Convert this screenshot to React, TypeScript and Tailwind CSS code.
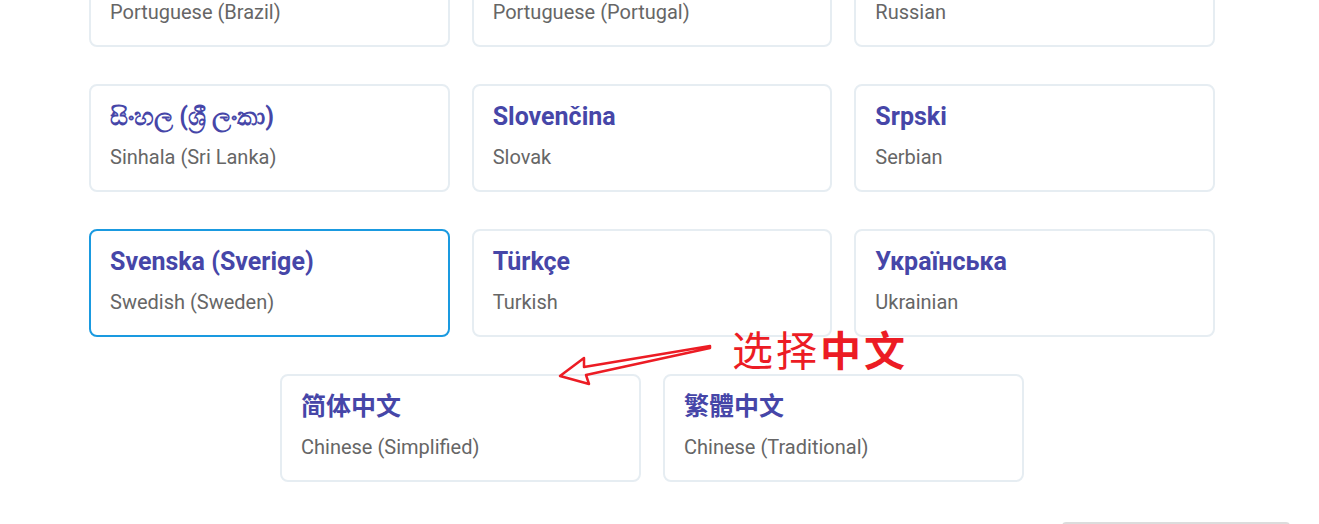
import React from 'react'

type Lang = { name: string; label: string; selected?: boolean }

const rows: Lang[][] = [
  [
    { name: 'Português (Brasil)', label: 'Portuguese (Brazil)' },
    { name: 'Português (Portugal)', label: 'Portuguese (Portugal)' },
    { name: 'Русский', label: 'Russian' },
  ],
  [
    { name: 'සිංහල (ශ්‍රී ලංකා)', label: 'Sinhala (Sri Lanka)' },
    { name: 'Slovenčina', label: 'Slovak' },
    { name: 'Srpski', label: 'Serbian' },
  ],
  [
    { name: 'Svenska (Sverige)', label: 'Swedish (Sweden)', selected: true },
    { name: 'Türkçe', label: 'Turkish' },
    { name: 'Українська', label: 'Ukrainian' },
  ],
]

const chinese: Lang[] = [
  { name: '简体中文', label: 'Chinese (Simplified)' },
  { name: '繁體中文', label: 'Chinese (Traditional)' },
]

function LangCard({ lang }: { lang: Lang }) {
  return (
    <div
      className={`flex h-[108px] flex-col rounded-lg border-2 bg-white px-[19px] pt-[16px] ${
        lang.selected ? 'border-[#1a9ae0]' : 'border-[#e6edf2]'
      }`}
    >
      <div className="text-[25px] font-bold leading-[30px] text-[#4646a8]">{lang.name}</div>
      <div className="mt-[12px] text-[20px] leading-[26px] text-[#666666]">{lang.label}</div>
    </div>
  )
}

export default function App() {
  return (
    <div
      className="relative h-[524px] w-[1319px] overflow-hidden bg-white"
      style={{ fontFamily: 'Roboto, "Noto Sans", "Noto Sans CJK SC", sans-serif' }}
    >
      <div className="ml-[89px] mt-[-61px] flex w-[1126px] flex-col gap-[37px]">
        {rows.map((row, i) => (
          <div key={i} className="grid grid-cols-3 gap-[22px]">
            {row.map((l) => (
              <LangCard key={l.label} lang={l} />
            ))}
          </div>
        ))}
        <div className="flex justify-center gap-[22px]">
          {chinese.map((l) => (
            <div key={l.label} className="w-[361px]">
              <LangCard lang={l} />
            </div>
          ))}
        </div>
      </div>

      {/* bottom button edge */}
      <div className="ml-[1062px] mt-[40px] h-10 w-[228px] rounded border-2 border-[#dcdcdc]" />

      {/* annotation */}
      <svg className="absolute left-0 top-0" width="1319" height="524">
        <polygon
          points="710,346 584,367 584,358 560,376 589,384 586,375 710,348"
          fill="none"
          stroke="#ec1c24"
          strokeWidth="2.5"
          strokeLinejoin="round"
        />
      </svg>
      <div
        className="absolute left-[732px] top-[324px] text-[41px] leading-[48px] tracking-[3px] text-[#ec1c24]"
        style={{ fontFamily: '"Noto Sans CJK SC", sans-serif' }}
      >
        选择<span className="font-bold">中文</span>
      </div>
    </div>
  )
}
